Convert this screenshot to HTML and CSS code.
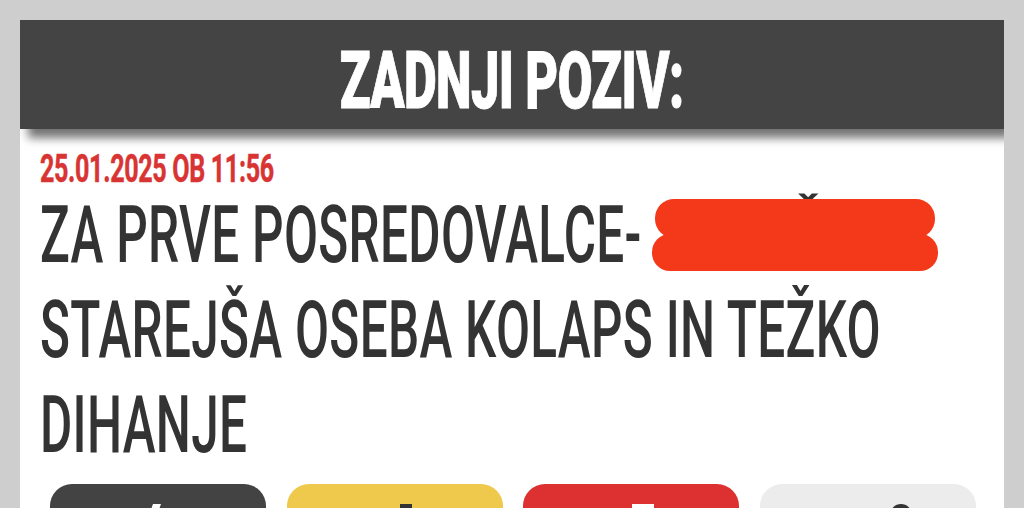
FILE: index.html
```html
<!DOCTYPE html>
<html lang="sl">
<head>
<meta charset="utf-8">
<link rel="stylesheet" href="styles.css">
</head>
<body>
<div class="card">
  <div class="header"><span class="header-title">ZADNJI POZIV:</span></div>
  <div class="content">
    <div class="date"><span class="sx">25.01.2025 OB 11:56</span></div>
    <h1 class="title">
      <span class="line">ZA PRVE POSREDOVALCE-</span>
      <span class="line">STAREJŠA OSEBA KOLAPS IN TEŽKO</span>
      <span class="line">DIHANJE</span>
    </h1>
    <div class="redact">
      <span class="caron">ˇ</span>
      <svg width="290" height="76" viewBox="0 0 290 76">
        <rect x="3" y="2" width="280" height="39" rx="19" fill="#f4391a"/>
        <rect x="0" y="37" width="286" height="37" rx="18" fill="#f4391a"/>
        <rect x="20" y="30" width="246" height="14" fill="#f4391a"/>
      </svg>
    </div>
    <div class="buttons">
      <div class="btn btn-dark"><span class="ico ico-w1"></span></div>
      <div class="btn btn-yellow"><span class="ico ico-d1"></span></div>
      <div class="btn btn-red"><span class="ico ico-w2"></span></div>
      <div class="btn btn-light"><span class="ico ico-d2"></span></div>
    </div>
  </div>
</div>
</body>
</html>
```
FILE: styles.css
```css
html, body {
  margin: 0;
  padding: 0;
}
body {
  background: #cecece;
  padding: 20px 20px 0 20px;
  height: 508px;
  box-sizing: border-box;
  overflow: hidden;
  font-family: Roboto, "Liberation Sans", sans-serif;
}
.card {
  width: 984px;
  background: #ffffff;
  height: 488px;
  overflow: hidden;
}
.header {
  height: 109px;
  background: #444444;
  box-shadow: 8px 9px 9px rgba(0, 0, 0, 0.55);
  display: flex;
  justify-content: center;
  align-items: center;
  position: relative;
}
.header-title {
  display: block;
  color: #ffffff;
  font-size: 79px;
  font-weight: 900;
  line-height: 109px;
  padding-top: 14px;
  white-space: nowrap;
  letter-spacing: -1px;
  transform: scaleX(0.64);
  transform-origin: center;
  -webkit-text-stroke: 1px #ffffff;
}
.content {
  position: relative;
  padding: 20px 0 0 20px;
}
.sx, .line {
  display: block;
  white-space: nowrap;
  transform-origin: left center;
}
.date {
  color: #d83434;
  font-size: 38px;
  font-weight: 700;
  line-height: 40px;
  letter-spacing: -0.5px;
}
.date .sx {
  transform: scaleX(0.66);
  -webkit-text-stroke: 0.5px #d83434;
}
.title {
  margin: -1px 0 0 0;
  color: #333333;
  font-size: 79px;
  font-weight: 500;
  line-height: 95px;
  letter-spacing: 0.5px;
}
.title .line {
  transform: scaleX(0.626);
}
.redact {
  position: absolute;
  left: 632px;
  top: 68px;
  width: 290px;
  height: 76px;
}
.redact svg {
  display: block;
  position: relative;
}
.caron {
  position: absolute;
  left: 144px;
  top: -1px;
  font-size: 52px;
  font-weight: 700;
  line-height: 40px;
  color: #333333;
}
.buttons {
  display: grid;
  grid-template-columns: repeat(4, 216px);
  column-gap: 20.5px;
  margin: 11px 0 0 10px;
}
.btn {
  height: 70px;
  border-radius: 22px;
  display: flex;
  justify-content: center;
  padding-top: 20px;
  box-sizing: border-box;
}
.btn-dark { background: #434343; }
.btn-yellow { background: #eec94b; }
.btn-red { background: #dd3030; }
.btn-light { background: #ececec; }
.ico {
  display: block;
  width: 22px;
  height: 22px;
}
.ico-w1 {
  width: 8px;
  background: #ffffff;
  transform: skewX(-20deg);
  margin-left: -10px;
}
.ico-d1 {
  width: 12px;
  background: #333333;
  margin-left: 22px;
}
.ico-w2 {
  width: 22px;
  background: #ffffff;
  margin-left: 24px;
}
.ico-d2 {
  width: 22px;
  background: #333333;
  border-radius: 11px 11px 0 0;
  margin-left: 66px;
}
```
